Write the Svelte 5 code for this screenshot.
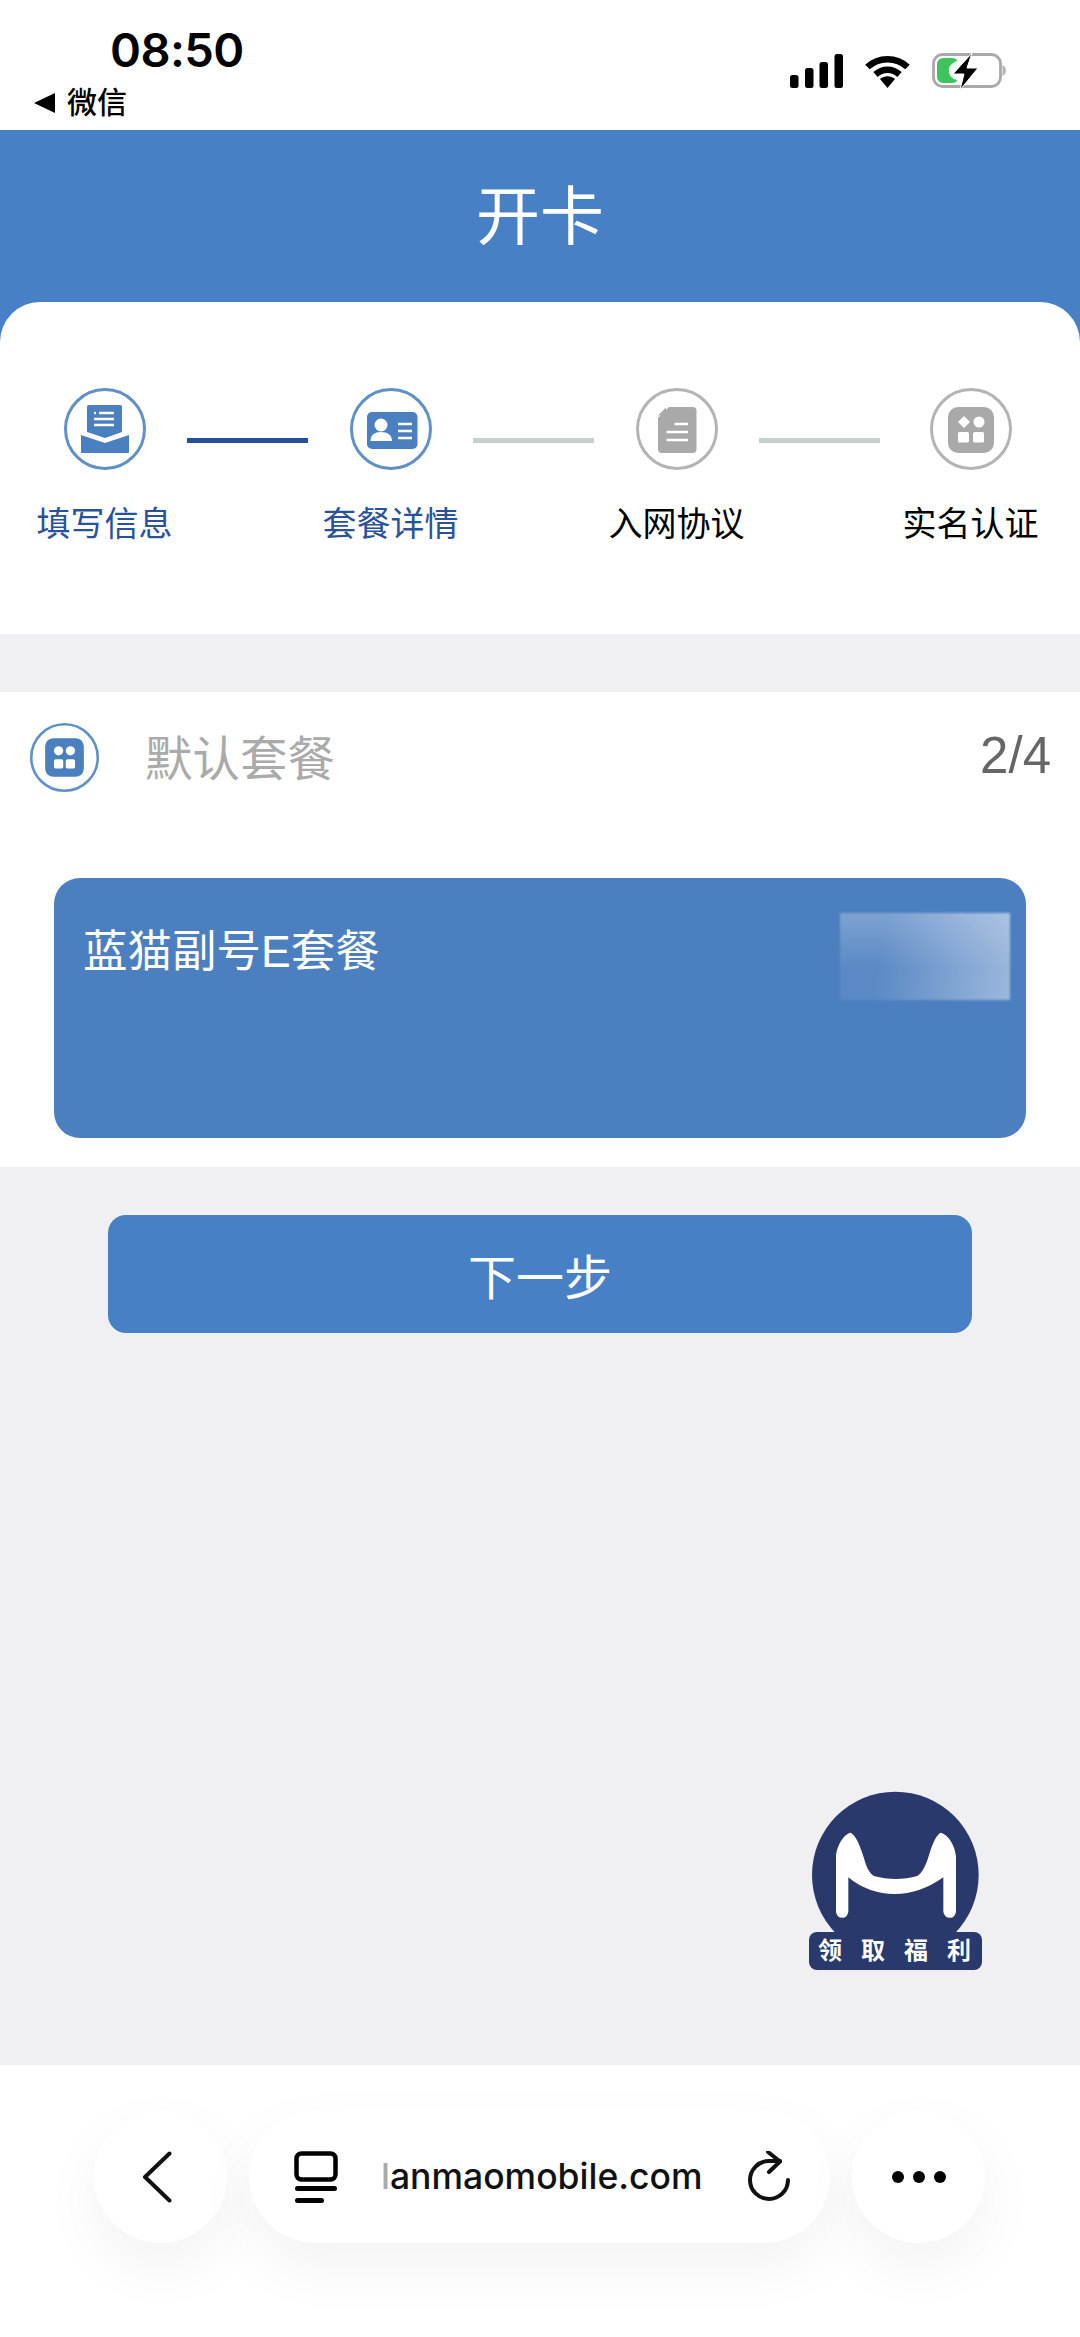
<script>
const steps = [
  { label: '填写信息', icon: 'mail', done: true },
  { label: '套餐详情', icon: 'card', done: true },
  { label: '入网协议', icon: 'doc', done: false },
  { label: '实名认证', icon: 'grid', done: false }
]
</script>

{#snippet stepIcon(name)}
  <svg class="step-icon" viewBox="0 0 82 82">
    <circle class="ring" cx="41" cy="41" r="39.500" />
    {#if name === 'mail'}
      <path class="fill" d="M23 19a2 2 0 0 1 2-2h31a2 2 0 0 1 2 2v25l-17 6-18-6z" />
      <path class="fill" d="M17 47l24 8 24-8v17a1 1 0 0 1-1 1H18a1 1 0 0 1-1-1z" />
      <path class="cut" d="M30 25h2M35 25h15M30 31h20M30 37h20" />
    {:else if name === 'card'}
      <rect class="fill" x="17" y="24" width="50.500" height="37" rx="5" />
      <circle class="white" cx="31" cy="37" r="6.500" />
      <path class="white" d="M20.500 53c0-6 4-9 10.500-9s11 3 11 9z" />
      <path class="cut" d="M48 36h14M48 43h14M48 50h14" />
    {:else if name === 'doc'}
      <path class="fill" d="M33 19h23.500a4 4 0 0 1 4 4v38a4 4 0 0 1-4 4H26a4 4 0 0 1-4-4V30z" />
      <path class="fill" d="M30 19.500v8h-8z" />
      <path class="cut" d="M38.500 36H52M30.500 44H52M30.500 52H52" />
    {:else}
      <rect class="fill" x="18" y="19" width="46" height="46" rx="10" />
      <path class="white" d="M34 28l6 6-6 6-6-6z" />
      <circle class="white" cx="49" cy="34" r="5.500" />
      <rect class="white" x="28" y="44" width="11" height="10.500" rx="1.500" />
      <rect class="white" x="43" y="44" width="11" height="10.500" rx="1.500" />
    {/if}
  </svg>
{/snippet}

<div class="page">
  <div class="status">
    <div class="status-left">
      <div class="time">08:50</div>
      <div class="back-app"><span class="tri"></span>微信</div>
    </div>
    <div class="status-right">
      <svg width="53" height="36" viewBox="0 0 53 36">
        <rect x="0" y="22" width="8.500" height="13" rx="2.500" />
        <rect x="15" y="15" width="8.500" height="20" rx="2.500" />
        <rect x="29.500" y="9" width="8.500" height="26" rx="2.500" />
        <rect x="44.500" y="1" width="8.500" height="34" rx="2.500" />
      </svg>
      <svg width="45" height="36" viewBox="0 0 45 36">
        <path class="wifi" d="M2.500 14c11-10.500 29-10.500 40 0M10.500 21.500c7-6.500 17-6.500 24 0" />
        <path d="M15 26c4.500-3.800 10.500-3.800 15 0l-7.500 9z" />
      </svg>
      <svg width="74" height="37" viewBox="0 0 74 37">
        <rect x="1.500" y="1.500" width="67" height="32" rx="9" fill="none" stroke="#a9a9a9" stroke-width="2.800" />
        <path d="M70.500 12c2.500 1 3.500 3.500 3.500 5.500s-1 4.500-3.500 5.500z" fill="#b5b5b5" />
        <path d="M11 5h9c3 0 5 1 5 3-5 2-9 6-8 10 0 4 3 8 8 9 0 2-2 3-5 3h-9a6 6 0 0 1-6-6V11a6 6 0 0 1 6-6z" fill="#3fc45d" />
        <path d="M40 0L21 21h11l-4 16 18-22H35z" fill="#000" stroke="#fff" stroke-width="1" />
      </svg>
    </div>
  </div>

  <header class="title">开卡</header>

  <section class="stepper">
    {#each steps as step, i}
      {#if i > 0}
        <div class="line" class:active={step.done}></div>
      {/if}
      <div class="step" class:done={step.done}>
        {@render stepIcon(step.icon)}
        <div class="step-label">{step.label}</div>
      </div>
    {/each}
  </section>

  <section class="plan">
    <div class="plan-head">
      <svg class="plan-icon" viewBox="0 0 82 82">
        <circle class="ring" cx="41" cy="41" r="39.500" />
        <rect class="fill" x="18" y="18" width="46" height="46" rx="10" />
        <circle class="white" cx="34" cy="33" r="5.500" />
        <circle class="white" cx="48" cy="33" r="5.500" />
        <rect class="white" x="28.500" y="43" width="11" height="11" rx="2" />
        <rect class="white" x="42.500" y="43" width="11" height="11" rx="2" />
      </svg>
      <div class="plan-name">默认套餐</div>
      <div class="plan-count">2/4</div>
    </div>
    <div class="plan-card">
      <div class="plan-title">蓝猫副号E套餐</div>
      <div class="blur"></div>
    </div>
  </section>

  <button class="next">下一步</button>

  <div class="promo">
    <svg width="240" height="220" viewBox="0 0 720 660">
      <circle cx="346" cy="315" r="250" fill="#29396b" />
      <path fill="#fff" d="M168 255C172 225 190 195 210 188C225 190 240 225 252 265C260 295 270 312 282 318C325 330 370 330 412 318C425 310 437 290 447 255C458 220 470 192 483 188C505 195 525 225 528 260V425Q525 443 510 443Q493 443 490 425V322Q420 372 345 372Q265 372 205 322V425Q202 443 187 443Q170 443 168 425Z" />
    </svg>
    <div class="promo-label">领取福利</div>
  </div>

  <div class="browser">
    <div class="pill round">
      <svg class="chevron" width="30" height="52" viewBox="0 0 30 52">
        <path class="stroke" d="M27.500 2.500L3 26l24.500 23.500" />
      </svg>
    </div>
    <div class="pill url">
      <svg width="44" height="52" viewBox="0 0 44 52">
        <rect x="2.500" y="2.500" width="39" height="26" rx="5" fill="none" stroke="#000" stroke-width="4.500" />
        <rect x="1" y="35" width="42" height="5" rx="2.500" />
        <rect x="1" y="47" width="29" height="5" rx="2.500" />
      </svg>
      <div class="domain"><span class="faded">l</span>anmaomobile.com</div>
      <svg width="44" height="52" viewBox="0 0 44 52">
        <path class="stroke" d="M32 10H21A19 19 0 1 0 40 29" />
        <path class="stroke" d="M20 1l12 9.500L21 21" />
      </svg>
    </div>
    <div class="pill round">
      <svg width="54" height="12" viewBox="0 0 54 12">
        <circle cx="6" cy="6" r="6" />
        <circle cx="27" cy="6" r="6" />
        <circle cx="48" cy="6" r="6" />
      </svg>
    </div>
  </div>
</div>

<style>
:global(body) {
  margin: 0;
  background: #f0f0f3;
}
.page {
  position: relative;
  display: flex;
  flex-direction: column;
  height: 2337px;
  overflow: hidden;
  background: #f0f0f3;
  font-family: "Liberation Sans", "Noto Sans CJK SC", sans-serif;
}
.status {
  display: flex;
  justify-content: space-between;
  height: 130px;
  box-sizing: border-box;
  padding: 0 74px 0 34px;
  background: #fff;
}
.time {
  margin: 24px 0 0 76px;
  font-family: Inter, sans-serif;
  font-size: 47px;
  font-weight: 600;
  letter-spacing: -0.6px;
  line-height: 52px;
  color: #000;
}
.back-app {
  display: flex;
  align-items: center;
  gap: 12px;
  margin-top: 7px;
  font-size: 30px;
  font-weight: 500;
  line-height: 40px;
  color: #000;
}
.tri {
  width: 0;
  height: 0;
  border-top: 10px solid transparent;
  border-bottom: 10px solid transparent;
  border-right: 21px solid #000;
}
.status-right {
  display: flex;
  align-items: flex-start;
  gap: 22px;
  padding-top: 53px;
}
.wifi {
  fill: none;
  stroke: #000;
  stroke-width: 6.500;
}
.title {
  height: 212px;
  box-sizing: border-box;
  padding-top: 46px;
  background: #4880c5;
  color: #fff;
  font-size: 64px;
  line-height: 82px;
  text-align: center;
}
.stepper {
  display: flex;
  align-items: flex-start;
  gap: 16px;
  height: 332px;
  box-sizing: border-box;
  margin-top: -40px;
  padding: 86px 0 0 38px;
  background: #fff;
  border-radius: 40px 40px 0 0;
}
.step {
  display: flex;
  flex-direction: column;
  align-items: center;
  width: 133px;
  color: #000;
  --c: #a9a9a9;
  --r: #b3b3b3;
}
.step:last-child {
  margin-left: 8px;
}
.step.done {
  color: #2a5298;
  --c: #4a7fc0;
  --r: #5f90c8;
}
.step-icon {
  width: 82px;
  height: 82px;
  margin-bottom: 32px;
}
.ring {
  fill: #fff;
  stroke: var(--r, #5f90c8);
  stroke-width: 3;
}
.fill {
  fill: var(--c, #4a7fc0);
}
.white {
  fill: #fff;
}
.cut {
  fill: none;
  stroke: #fff;
  stroke-width: 2.500;
}
.step-label {
  font-size: 34px;
  line-height: 44px;
  white-space: nowrap;
}
.line {
  width: 121px;
  height: 5px;
  margin-top: 50px;
  background: #c5d0ce;
}
.line.active {
  background: #24509f;
}
.plan {
  margin-top: 58px;
  height: 475px;
  box-sizing: border-box;
  padding: 30px 30px 0;
  background: #fff;
}
.plan-head {
  display: flex;
  align-items: center;
  height: 70px;
}
.plan-icon {
  width: 69px;
  height: 69px;
}
.plan-name {
  margin: -3px 0 0 46px;
  font-size: 47.500px;
  color: #aaa;
}
.plan-count {
  margin: -3px -1px 0 auto;
  font-size: 51px;
  color: #666;
}
.plan-card {
  position: relative;
  height: 260px;
  box-sizing: border-box;
  margin: 86px 24px 0;
  padding: 46px 29px;
  background: #4c7fc0;
  border-radius: 26px;
}
.plan-title {
  font-size: 44.500px;
  line-height: 56px;
  color: #fff;
}
.blur {
  position: absolute;
  top: 35px;
  right: 16px;
  width: 170px;
  height: 87px;
  filter: blur(1px);
  background:
    linear-gradient(to bottom, rgba(255,255,255,0.22), rgba(255,255,255,0) 65%),
    linear-gradient(100deg, rgba(255,255,255,0.08) 25%, rgba(255,255,255,0.45) 100%);
}
.next {
  width: 864px;
  height: 118px;
  margin: 48px 0 0 108px;
  padding: 0;
  border: 0;
  border-radius: 18px;
  background: #4880c5;
  color: #fff;
  font: inherit;
  font-size: 48px;
}
.promo {
  position: absolute;
  left: 780px;
  top: 1770px;
  width: 240px;
  height: 220px;
}
.promo svg {
  display: block;
}
.promo-label {
  position: absolute;
  left: 29px;
  top: 162px;
  width: 173px;
  height: 38px;
  box-sizing: border-box;
  padding-left: 9px;
  border-radius: 8px;
  background: #29396b;
  color: #fff;
  font-size: 24px;
  font-weight: 700;
  letter-spacing: 19px;
  line-height: 38px;
  white-space: nowrap;
}
.browser {
  display: flex;
  gap: 22px;
  margin-top: auto;
  height: 272px;
  box-sizing: border-box;
  padding: 45px 94px 0;
  background: #fff;
}
.pill {
  display: flex;
  align-items: center;
  height: 133px;
  background: #fff;
  border-radius: 67px;
  box-shadow: 0 24px 60px rgba(0, 0, 0, 0.05);
}
.round {
  justify-content: center;
  width: 133px;
  flex: none;
}
.chevron {
  margin-left: -7px;
}
.url {
  width: 581px;
  box-sizing: border-box;
  padding: 0 38px 0 45px;
}
.domain {
  margin-left: 43px;
  flex: 1;
  font-family: Inter, sans-serif;
  font-size: 35.500px;
  font-weight: 500;
  color: #111;
  white-space: nowrap;
}
.faded {
  color: #aaa;
}
.stroke {
  fill: none;
  stroke: #111;
  stroke-width: 4;
  stroke-linecap: round;
  stroke-linejoin: round;
}
</style>
